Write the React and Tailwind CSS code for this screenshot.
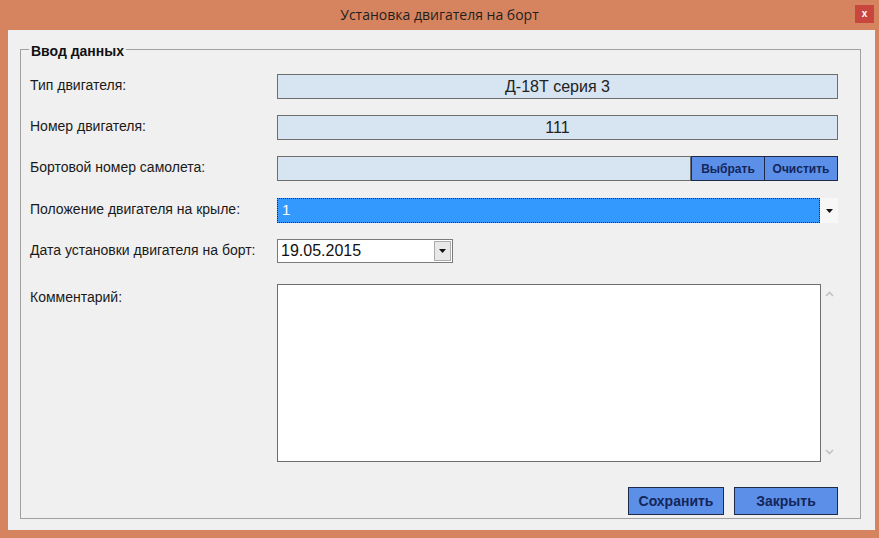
import React from 'react';

const ReadField = ({ value }) => (
  <div className="flex-1 h-[25px] bg-[#d7e4f2] border border-[#6e6e6e] flex items-center justify-center text-[16px] text-[#222]">
    {value}
  </div>
);

const Row = ({ label, className = '', children }) => (
  <div className={`flex items-center ${className}`}>
    <div className="w-[247px] text-[14px] text-[#1a1a1a] -mt-[2px]">{label}</div>
    {children}
  </div>
);

const Arrow = () => (
  <svg width="7" height="4" viewBox="0 0 7 4">
    <path d="M0 0h7L3.5 4z" fill="#111" />
  </svg>
);

const App = () => {
  return (
    <div className="w-[879px] h-[538px] bg-[#d6845f] flex flex-col font-['Liberation_Sans',Arial,sans-serif]">
      <div className="h-[30px] flex items-center">
        <div className="w-[24px]" />
        <div className="flex-1 text-center text-[14px] text-[#1e1e1e] font-['Open_Sans',sans-serif] -mt-[1px]">
          Установка двигателя на борт
        </div>
        <div className="w-[19px] h-[18px] mr-[5px] -mt-[2px] bg-[#c8463e] flex items-center justify-center text-white text-[10px] font-bold leading-none">
          x
        </div>
      </div>

      <div className="flex-1 ml-[8px] mr-[4px] mb-[8px] bg-[#f0f0f0] flex">
        <div className="relative flex-1 ml-[12px] mt-[19px] mr-[14px] mb-[11px] border border-[#a0a0a0] pl-[9px] pr-[22px] pt-[24px] flex flex-col">
          <span className="absolute left-[8px] -top-[8px] px-[2px] bg-[#f0f0f0] font-bold text-[14px] leading-[18px] text-[#111]">
            Ввод данных
          </span>

          <Row label="Тип двигателя:">
            <ReadField value="Д-18Т серия 3" />
          </Row>

          <Row label="Номер двигателя:" className="mt-[16px]">
            <ReadField value="111" />
          </Row>

          <Row label="Бортовой номер самолета:" className="mt-[16px]">
            <div className="flex-1 h-[25px] flex">
              <div className="flex-1 bg-[#d7e4f2] border border-[#6e6e6e]" />
              <button className="w-[73px] bg-[#5b8fe8] border-y border-l border-[#1e2a48] text-[12px] font-bold text-[#14265a]">
                Выбрать
              </button>
              <button className="w-[74px] bg-[#5b8fe8] border border-[#1e2a48] text-[12px] font-bold text-[#14265a]">
                Очистить
              </button>
            </div>
          </Row>

          <Row label="Положение двигателя на крыле:" className="mt-[17px]">
            <div className="flex-1 h-[25px] flex">
              <div className="flex-1 bg-[#3399ff] border border-dotted border-[#1a2a3a] text-white text-[15px] leading-[21px] pl-[4px]">
                1
              </div>
              <div className="w-[18px] bg-[#f7f7f7] flex items-center justify-center">
                <Arrow />
              </div>
            </div>
          </Row>

          <Row label="Дата установки двигателя на борт:" className="mt-[16px]">
            <div className="w-[176px] h-[24px] bg-white border border-[#7a7a7a] flex items-center">
              <div className="flex-1 pl-[3px] text-[16px] text-[#111]">19.05.2015</div>
              <div className="w-[17px] h-[20px] mr-[1px] bg-[#e8e8e8] border border-[#acacac] flex items-center justify-center">
                <Arrow />
              </div>
            </div>
          </Row>

          <div className="flex mt-[21px]">
            <div className="w-[247px] text-[14px] text-[#1a1a1a] pt-[3px]">Комментарий:</div>
            <div className="flex-1 h-[178px] flex">
              <div className="flex-1 bg-white border border-[#6e6e6e]" />
              <div className="w-[17px] flex flex-col items-center justify-between py-[7px]">
                <svg width="9" height="6" viewBox="0 0 9 6">
                  <path d="M1 5l3.5-3.5L8 5" stroke="#c2c2c2" strokeWidth="1.6" fill="none" />
                </svg>
                <svg width="9" height="6" viewBox="0 0 9 6">
                  <path d="M1 1l3.5 3.5L8 1" stroke="#c2c2c2" strokeWidth="1.6" fill="none" />
                </svg>
              </div>
            </div>
          </div>

          <div className="flex justify-end gap-[10px] mt-[25px]">
            <button className="w-[96px] h-[28px] bg-[#5b8fe8] border border-[#1e2a48] text-[14px] font-bold text-[#14265a]">
              Сохранить
            </button>
            <button className="w-[104px] h-[28px] bg-[#5b8fe8] border border-[#1e2a48] text-[14px] font-bold text-[#14265a]">
              Закрыть
            </button>
          </div>
        </div>
      </div>
    </div>
  );
};

export default App;
